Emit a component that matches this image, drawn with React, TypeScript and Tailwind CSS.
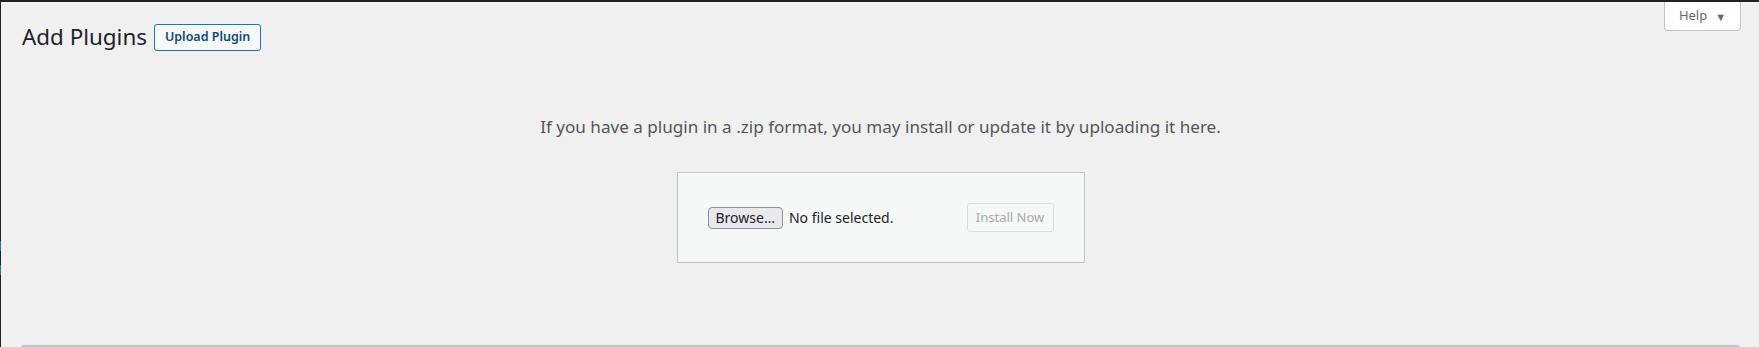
const font = { fontFamily: '"Noto Sans", "Open Sans", sans-serif' };

export default function App() {
  return (
    <div className="h-[347px] w-full overflow-hidden bg-[#f0f0f1] text-[#3c434a]" style={font}>
      <div className="h-[2px] bg-[#1d2327]" />
      <div className="flex">
        {/* admin menu edge */}
        <div className="flex w-px flex-col self-stretch bg-[#1d2327]">
          <div className="mt-[239px] h-[10px] bg-[#2271b1]" />
          <div className="mt-[14px] h-[10px] bg-[#2271b1]" />
        </div>
        <div className="flex-1 pl-[21px] pr-[20px]">
          <div className="float-right -mr-[2px] flex h-[29px] w-[77px] items-center justify-center gap-[8px] rounded-b-[4px] border border-t-0 border-[#c3c4c7] bg-white text-[13px] text-[#646970]">
            <span>Help</span>
            <span className="text-[11px] leading-none">▼</span>
          </div>

          <div className="flex items-center gap-[7px] pt-[20px]">
            <h1 className="text-[22.4px] leading-[30px] font-normal text-[#1d2327]">Add Plugins</h1>
            <button className="h-[27px] rounded-[3px] border border-[#2271b1] bg-[#f6f7f7] px-[10px] text-[12.5px] font-semibold text-[#0a4b78]">
              Upload Plugin
            </button>
          </div>

          <div className="clear-both flex flex-col items-center">
            <p className="mt-[62px] text-[17.1px] leading-[26px] text-[#50575e]">
              If you have a plugin in a .zip format, you may install or update it by uploading it here.
            </p>
            <div className="mt-[32px] flex w-[408px] items-center justify-between border border-[#c3c4c7] bg-[#f6f7f7] p-[30px]">
              <div className="flex items-center gap-[6px] text-[14px] text-[#1d2327]">
                <span className="flex h-[22px] items-center rounded-[4px] border border-[#8f8f9d] bg-[#e9e9ed] px-[7px]">
                  Browse…
                </span>
                <span>No file selected.</span>
              </div>
              <span className="flex h-[29px] w-[87px] items-center justify-center rounded-[3px] border border-[#dcdcde] bg-[#f6f7f7] text-[13px] text-[#a7aaad]">
                Install Now
              </span>
            </div>
          </div>

          <div className="mt-[82px] h-[2px] bg-[#c3c4c7]" />
        </div>
      </div>
    </div>
  );
}
